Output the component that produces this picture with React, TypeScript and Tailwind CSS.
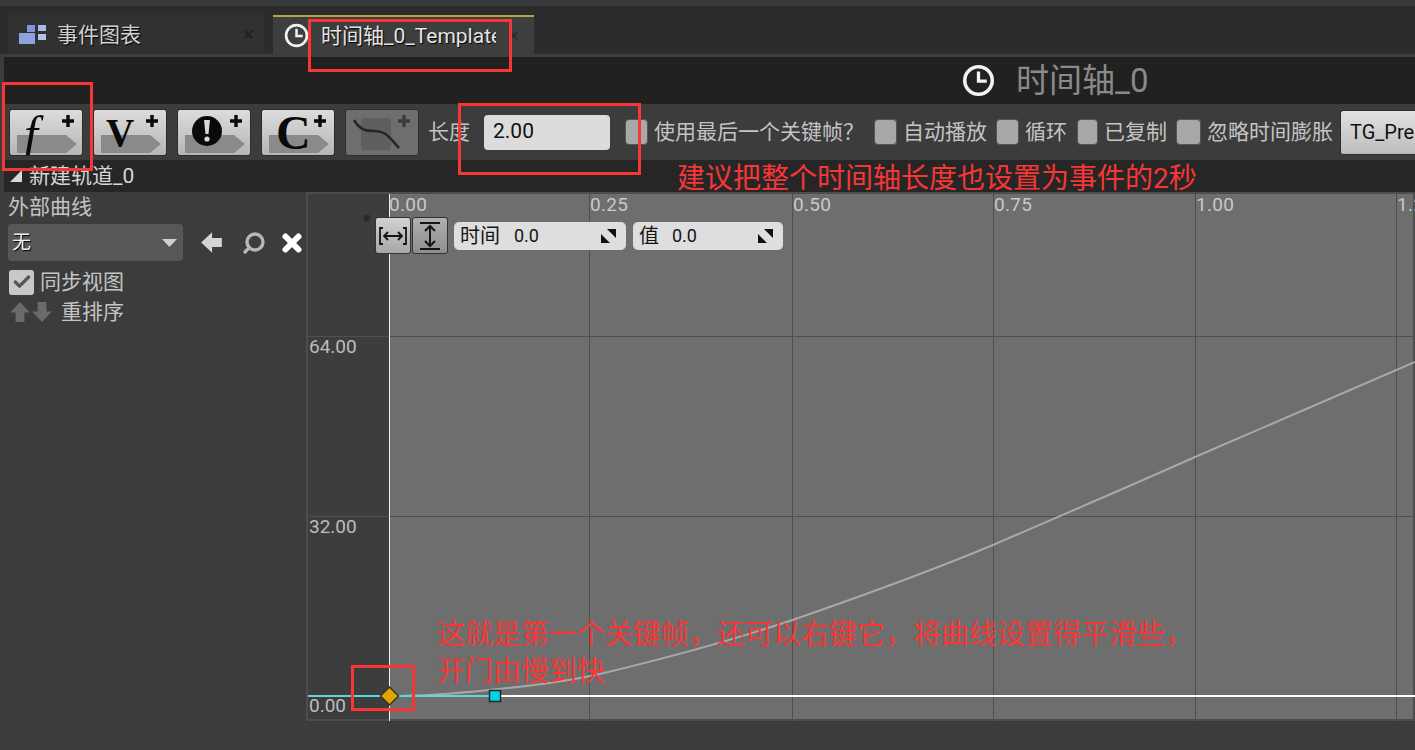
import React from 'react';
import { Check, Search, X } from 'lucide-react';

const FONT = "font-['Roboto','Noto_Sans_CJK_SC',sans-serif]";

const ClockIcon = ({ size }: { size: number }) => (
  <svg width={size} height={size} viewBox="0 0 24 24" fill="none" stroke="#f2f2f2" strokeWidth="2.6">
    <circle cx="12" cy="12" r="10" />
    <path d="M12 5.5V12.5H18" strokeWidth="2.4" />
  </svg>
);

const GraphIcon = () => (
  <svg width="28" height="22" viewBox="0 0 28 22">
    <rect x="8" y="1" width="8" height="7" fill="#7f95d8" />
    <rect x="19" y="1" width="8" height="6" fill="#a9b8e6" />
    <rect x="0" y="9" width="16" height="11" fill="#8ea2e0" />
    <rect x="19" y="10" width="8" height="6" fill="#b4c2ea" />
  </svg>
);

const ArrowGlyph = ({ rotate, color, size }: { rotate: string; color: string; size: number }) => (
  <svg className={rotate} width={size} height={size} viewBox="0 0 20 20">
    <path d="M10 1L19 10.5H14V19H6V10.5H1Z" fill={color} />
  </svg>
);

// toolbar button: light gradient, arrow tag behind the glyph, plus at top right
const AddButton = ({ children, dim }: { children: React.ReactNode; dim?: boolean }) => (
  <div
    className={`relative w-[74px] h-[47px] shrink-0 rounded-[3px] border border-[#2c2c2c] overflow-hidden ${
      dim ? 'bg-[#6e6e6e]' : 'bg-gradient-to-b from-[#dcdcdc] to-[#b6b6b6]'
    }`}
  >
    {!dim && (
      <svg className="absolute left-[7px] top-[23px]" width="60" height="20" viewBox="0 0 60 20">
        <path d="M0 2H49L60 11L49 20H0Z" fill="#8a8a8a" />
      </svg>
    )}
    <svg className="absolute left-[52px] top-[5px]" width="12" height="12" viewBox="0 0 12 12">
      <path d="M6 0V12M0 6H12" stroke={dim ? '#3a3a3a' : '#0a0a0a'} strokeWidth="3.4" />
    </svg>
    {children}
  </div>
);

const Glyph = ({ children, className }: { children: React.ReactNode; className: string }) => (
  <span className={`absolute font-['Liberation_Serif',serif] text-[#0a0a0a] ${className}`}>{children}</span>
);

const Option = ({ label, className }: { label: string; className: string }) => (
  <div className={`flex items-center shrink-0 ${className}`}>
    <div className="w-[25px] h-[26px] rounded-[4px] bg-[#a8a8a8] border border-[#555555]" />
    <span className="ml-[6px] text-[21px] leading-[28px] text-[#c4c4c4]">{label}</span>
  </div>
);

const SpinBox = ({ label, value, width, gap }: { label: string; value: string; width: string; gap: string }) => (
  <div className={`flex items-center h-[28px] rounded-[5px] bg-[#dedede] pl-[6px] text-[#141414] ${width}`}>
    <span className="text-[20px] leading-[26px]">{label}</span>
    <span className={`text-[18px] leading-[26px] ${gap}`}>{value}</span>
    <svg className="ml-auto mr-[10px]" width="15" height="15" viewBox="0 0 15 15">
      <path d="M6 1H15V10Z M0 6L9 15H0Z" fill="#111111" />
    </svg>
  </div>
);

const RedBox = ({ className }: { className: string }) => (
  <div className={`absolute border-[3px] border-[#f73636] pointer-events-none ${className}`} />
);

const App: React.FC = () => {
  return (
    <div className={`relative w-[1415px] h-[750px] overflow-hidden bg-[#3c3c3c] ${FONT}`}>
      {/* window strip */}
      <div className="h-[6px] bg-[#3a3a3a]" />
      <div className="h-[9px] bg-[#2c2c2c]" />

      {/* tabs */}
      <div className="flex h-[39px] pl-[8px] bg-[#2c2c2c]">
        <div className="flex items-center w-[256px] bg-[#313131] pl-[11px] pr-[5px]">
          <GraphIcon />
          <span className="ml-[10px] text-[21px] leading-[28px] text-[#d0d0d0] [text-shadow:1px_1px_1px_#000]">事件图表</span>
          <X className="ml-auto mr-[4px] w-[13px] h-[13px] text-[#222222]" strokeWidth={4} />
        </div>
        <div className="flex items-center w-[261px] ml-[9px] pl-[11px] bg-[#3e3e3e] border-t-2 border-[#b5a24a]">
          <ClockIcon size={25} />
          <span className="ml-[12px] w-[175px] overflow-hidden whitespace-nowrap text-[21px] leading-[28px] text-[#e4e4e4] [text-shadow:1px_1px_1px_#000]">
            时间轴_0_Template
          </span>
          <X className="ml-[11px] w-[13px] h-[13px] text-[#2e2e2e]" strokeWidth={4} />
        </div>
      </div>

      <div className="h-[3px] ml-[4px] bg-[#3e3e3e]" />

      <div className="ml-[4px]">
        {/* title bar */}
        <div className="flex items-center h-[47px] bg-[#212121] pl-[958px]">
          <ClockIcon size={33} />
          <span className="ml-[21px] text-[33px] leading-[40px] text-[#8a8a8a] whitespace-nowrap">时间轴_0</span>
        </div>

        {/* toolbar */}
        <div className="flex items-center h-[56px] bg-[#3c3c3c] pl-[5px] gap-[10px] whitespace-nowrap">
          <AddButton>
            <Glyph className="left-[14px] top-[-1px] text-[50px] leading-[50px] italic">f</Glyph>
          </AddButton>
          <AddButton>
            <Glyph className="left-[12px] top-[0px] text-[39px] leading-[46px] font-bold">V</Glyph>
          </AddButton>
          <AddButton>
            <svg className="absolute left-[14px] top-[6px]" width="30" height="30" viewBox="0 0 30 30">
              <circle cx="15" cy="15" r="15" fill="#0a0a0a" />
              <path d="M12 4H18L16.5 18H13.5Z" fill="#d8d8d8" />
              <circle cx="15" cy="23" r="2.6" fill="#d8d8d8" />
            </svg>
          </AddButton>
          <AddButton>
            <Glyph className="left-[14px] top-[-2px] text-[48px] leading-[50px] font-bold">C</Glyph>
          </AddButton>
          <AddButton dim>
            <svg className="absolute left-[6px] top-[6px]" width="50" height="36" viewBox="0 0 50 36" fill="none">
              <rect x="9" y="2" width="30" height="32" rx="3" fill="#5f5f5f" />
              <path d="M2 4C8 14 14 15 22 15C34 15 38 22 47 32" stroke="#262626" strokeWidth="2.6" />
            </svg>
          </AddButton>

          <span className="ml-[-1px] text-[21px] leading-[28px] text-[#c4c4c4]">长度</span>
          <div className="ml-[4px] flex items-center w-[126px] h-[35px] shrink-0 rounded-[4px] bg-[#dcdcdc] pl-[9px] text-[21px] text-[#111111]">
            2.00
          </div>
          <Option label="使用最后一个关键帧？" className="ml-[5px] w-[239px]" />
          <Option label="自动播放" className="w-[113px]" />
          <Option label="循环" className="w-[71px] ml-[-1px]" />
          <Option label="已复制" className="w-[90px]" />
          <Option label="忽略时间膨胀" className="ml-[-1px]" />
          <div className="ml-[-3px] flex items-center h-[45px] w-[110px] shrink-0 pl-[9px] rounded-[3px] border border-[#2c2c2c] bg-gradient-to-b from-[#e2e2e2] to-[#bcbcbc] text-[20px] text-[#111111]">
            TG_PrePhysics
          </div>
        </div>

        {/* track header */}
        <div className="flex items-center h-[32px] bg-[#262626] pl-[6px]">
          <svg width="12" height="12" viewBox="0 0 12 12">
            <path d="M12 0V12H0Z" fill="#d8d8d8" />
          </svg>
          <span className="ml-[7px] text-[21px] leading-[26px] text-[#d6d6d6]">新建轨道_0</span>
        </div>
      </div>

      {/* body */}
      <div className="flex h-[558px]">
        <div className="w-[306px] shrink-0 pl-[8px] pt-[3px]">
          <div className="text-[21px] leading-[24px] text-[#c4c4c4]">外部曲线</div>
          <div className="flex items-center mt-[5px]">
            <div className="flex items-center shrink-0 w-[175px] h-[37px] rounded-[4px] bg-[#575757] pl-[4px] pr-[6px]">
              <span className="text-[19px] leading-[26px] text-[#f0f0f0] [text-shadow:1px_1px_1px_#000]">无</span>
              <svg className="ml-auto" width="15" height="8" viewBox="0 0 15 8">
                <path d="M0 0H15L7.5 8Z" fill="#d0d0d0" />
              </svg>
            </div>
            <div className="ml-[17px] shrink-0">
              <ArrowGlyph rotate="-rotate-90" color="#d4d4d4" size={23} />
            </div>
            <Search className="ml-[19px] shrink-0 w-[24px] h-[24px] text-[#b8b8b8] -scale-x-100" strokeWidth={3.4} />
            <X className="ml-[13px] shrink-0 w-[26px] h-[26px] text-white" strokeWidth={5.5} />
          </div>
          <div className="flex items-center mt-[8px] ml-[1px]">
            <div className="flex items-center justify-center w-[25px] h-[25px] rounded-[3px] bg-[#c8c8c8]">
              <Check className="w-[20px] h-[20px] text-[#555555]" strokeWidth={4} />
            </div>
            <span className="ml-[6px] text-[21px] leading-[26px] text-[#c4c4c4]">同步视图</span>
          </div>
          <div className="flex items-center mt-[4px] ml-[1px]">
            <ArrowGlyph rotate="" color="#6a6a6a" size={22} />
            <ArrowGlyph rotate="rotate-180" color="#6a6a6a" size={22} />
            <span className="ml-[8px] text-[21px] leading-[26px] text-[#c4c4c4]">重排序</span>
          </div>
        </div>

        {/* curve canvas */}
        <div className="relative w-[1109px] h-[529px] border-2 border-[#4d4d4d] bg-[#3d3d3d]">
          <div className="absolute left-[81px] right-0 top-0 bottom-0 bg-[#6e6e6e]" />
          <svg className="absolute left-0 top-0" width="1107" height="527" viewBox="0 0 1107 527" fill="none">
            {[281, 484, 685, 887, 1088].map((x) => (
              <line key={x} x1={x + 0.5} y1="0" x2={x + 0.5} y2="527" stroke="#4f4f4f" />
            ))}
            <line x1="0" y1="142.5" x2="1107" y2="142.5" stroke="#4f4f4f" />
            <line x1="0" y1="322.5" x2="1107" y2="322.5" stroke="#4f4f4f" />
            <line x1="81.5" y1="0" x2="81.5" y2="527" stroke="#f0f0f0" />
            <path
              d="M81 502C114 502 148 499.5 181 496C219 492 258 488 296 479C359 464 422 447 484.5 426C551 403 618 379 685 351C752 322 820 293 887 263C960 231 1034 200 1107 168"
              stroke="#a8a8a8"
              strokeWidth="2"
            />
            <line x1="187" y1="502" x2="1107" y2="502" stroke="#ffffff" strokeWidth="2" />
            <line x1="0" y1="502" x2="187" y2="502" stroke="#5fd6da" strokeWidth="2" />
            <circle cx="59" cy="24" r="3.5" fill="#2b2b2b" />
            <path d="M81.5 493L90.5 502L81.5 511L72.5 502Z" fill="#e2a400" stroke="#3a3520" strokeWidth="1.5" />
            <rect x="181.5" y="496.5" width="11" height="11" fill="#00d5e0" stroke="#1c2a2c" strokeWidth="1.5" />
          </svg>

          {/* axis labels */}
          {[
            ['0.00', 'left-[81px]'],
            ['0.25', 'left-[282px]'],
            ['0.50', 'left-[485px]'],
            ['0.75', 'left-[686px]'],
            ['1.00', 'left-[888px]'],
            ['1.25', 'left-[1089px]'],
          ].map(([text, pos]) => (
            <span key={text} className={`absolute top-[0px] ${pos} text-[19px] leading-[22px] tracking-[0.3px] text-[#c8c8c8]`}>
              {text}
            </span>
          ))}
          <span className="absolute left-[1px] top-[142px] text-[19px] leading-[22px] text-[#bcbcbc]">64.00</span>
          <span className="absolute left-[1px] top-[322px] text-[19px] leading-[22px] text-[#bcbcbc]">32.00</span>
          <span className="absolute left-[1px] top-[501px] text-[19px] leading-[22px] text-[#bcbcbc]">0.00</span>

          {/* floating controls on the graph */}
          <div className="absolute left-[67px] top-[23px] flex items-center gap-[1px]">
            <div className="flex items-center justify-center w-[36px] h-[37px] rounded-[3px] border border-[#333333] bg-gradient-to-b from-[#d2d2d2] to-[#a8a8a8]">
              <svg width="28" height="20" viewBox="0 0 28 20" fill="none" stroke="#151515" strokeWidth="1.8">
                <path d="M4 2H1V18H4M24 2H27V18H24M5 10H23M9 6L5 10L9 14M19 6L23 10L19 14" />
              </svg>
            </div>
            <div className="flex items-center justify-center w-[36px] h-[37px] rounded-[3px] border border-[#333333] bg-gradient-to-b from-[#b0b0b0] to-[#8e8e8e]">
              <svg width="22" height="28" viewBox="0 0 22 28" fill="none" stroke="#151515" strokeWidth="2">
                <path d="M1 1H21M1 27H21M11 4V24M6 9L11 4L16 9M6 19L11 24L16 19" />
              </svg>
            </div>
            <div className="ml-[5px] flex items-center gap-[7px]">
              <SpinBox label="时间" value="0.0" width="w-[172px]" gap="ml-[14px]" />
              <SpinBox label="值" value="0.0" width="w-[150px]" gap="ml-[13px]" />
            </div>
          </div>
        </div>
      </div>

      {/* red annotations */}
      <RedBox className="left-[2px] top-[82px] w-[91px] h-[89px]" />
      <RedBox className="left-[308px] top-[19px] w-[204px] h-[53px]" />
      <RedBox className="left-[458px] top-[103px] w-[183px] h-[72px]" />
      <RedBox className="left-[351px] top-[665px] w-[64px] h-[46px]" />
      <span className="absolute left-[677px] top-[160px] text-[28px] leading-[38px] text-[#f73636] whitespace-nowrap">
        建议把整个时间轴长度也设置为事件的2秒
      </span>
      <div className="absolute left-[437px] top-[616px] text-[28px] leading-[37px] text-[#f73636] whitespace-nowrap">
        <div>这就是第一个关键帧，还可以右键它，将曲线设置得平滑些，</div>
        <div>开门由慢到快</div>
      </div>
    </div>
  );
};

export default App;
